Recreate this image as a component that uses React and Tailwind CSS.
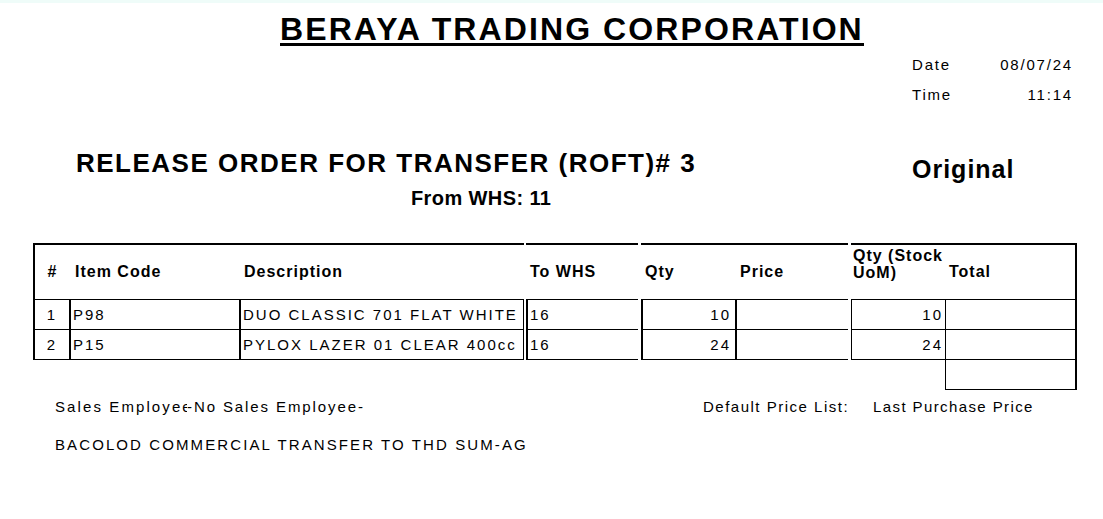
import React from 'react';

const rows = [
  { no: '1', code: 'P98', desc: 'DUO CLASSIC 701 FLAT WHITE', whs: '16', qty: '10', stock: '10' },
  { no: '2', code: 'P15', desc: 'PYLOX LAZER 01 CLEAR 400cc', whs: '16', qty: '24', stock: '24' },
];

const ReleaseOrder = () => {
  return (
    <div className="w-[1103px] h-[519px] bg-white text-black overflow-hidden font-['Liberation_Sans',Arial,sans-serif]">
      <div className="h-[3px] bg-[#effcf9]" />

      {/* company title */}
      <div className="ml-[280px] mt-[12px]">
        <span className="inline-block text-[32px] leading-[28px] font-bold tracking-[2.1px] border-b-[3px] border-black">
          BERAYA TRADING CORPORATION
        </span>
      </div>

      <div className="ml-[912px] mt-[3px] w-[161px] text-[15px] leading-[30px] tracking-[1.8px]">
        <div className="flex justify-between">
          <span>Date</span>
          <span>08/07/24</span>
        </div>
        <div className="flex justify-between">
          <span>Time</span>
          <span>11:14</span>
        </div>
      </div>

      <div className="flex items-start mt-[40px]">
        <div className="w-[912px] pl-[76px]">
          <div className="text-[26px] leading-[26px] font-bold tracking-[1.5px]">RELEASE ORDER FOR TRANSFER (ROFT)# 3</div>
          <div className="ml-[335px] mt-[12px] text-[20px] leading-[20px] font-bold tracking-[0.4px]">From WHS: 11</div>
        </div>
        <div className="mt-[7px] text-[25px] leading-[25px] font-bold tracking-[1px]">Original</div>
      </div>

      {/* line items */}
      <div className="ml-[33px] mt-[35px] w-[1044px] text-[15px] tracking-[2px]">
        <div className="flex h-[56px] text-[16px] font-bold tracking-[1px]">
          <div className="w-[491px] flex items-center border-t-2 border-l-2 border-black">
            <div className="w-[35px] text-center">#</div>
            <div className="w-[170px] pl-[5px]">Item Code</div>
            <div className="pl-[4px]">Description</div>
          </div>
          <div className="w-[2px]" />
          <div className="w-[112px] flex items-center border-t-2 border-black pl-[4px]">To WHS</div>
          <div className="w-[3px]" />
          <div className="w-[207px] flex items-center border-t-2 border-black">
            <div className="w-[96px] pl-[4px]">Qty</div>
            <div className="pl-[3px]">Price</div>
          </div>
          <div className="w-[3px]" />
          <div className="w-[226px] flex border-t-2 border-r-2 border-black">
            <div className="w-[94px] pl-[2px] pt-[2px] leading-[17px]">Qty (Stock<br />UoM)</div>
            <div className="pl-[4px] self-center">Total</div>
          </div>
        </div>

        {rows.map((r, i) => {
          const last = i === rows.length - 1 ? 'border-b' : '';
          return (
            <div key={r.no} className={`flex ${last ? 'h-[31px]' : 'h-[30px]'} leading-[29px]`}>
              <div className={`w-[38px] border-t border-l-2 border-r-2 border-black text-center ${last}`}>{r.no}</div>
              <div className={`w-[170px] border-t border-r-2 border-black pl-[2px] ${last}`}>{r.code}</div>
              <div className={`w-[283px] border-t border-r border-black pl-[2px] whitespace-nowrap ${last}`}>{r.desc}</div>
              <div className="w-[2px]" />
              <div className={`w-[112px] border-t border-l-2 border-black pl-[2px] ${last}`}>{r.whs}</div>
              <div className="w-[3px]" />
              <div className={`w-[96px] border-t border-l-2 border-r-2 border-black text-right pr-[4px] ${last}`}>{r.qty}</div>
              <div className={`w-[111px] border-t border-black ${last}`} />
              <div className="w-[3px]" />
              <div className={`w-[94px] border-t border-l border-black text-right pr-[2px] ${last}`}>{r.stock}</div>
              <div className={`w-[132px] border-t border-l border-r-2 border-black ${last}`} />
            </div>
          );
        })}

        <div className="ml-[912px] w-[132px] h-[30px] border-l border-r-2 border-b border-black" />
      </div>

      {/* footer */}
      <div className="flex mt-[7px] text-[15px] leading-[20px] tracking-[1.9px] whitespace-nowrap">
        <div className="w-[703px] pl-[55px] flex">
          {/* field is too narrow in the printout, last letter gets cut */}
          <span className="inline-block w-[132px] shrink-0 overflow-hidden tracking-[2.1px]">Sales Employee</span>
          <span>-No Sales Employee-</span>
        </div>
        <div className="w-[170px] tracking-[1.5px]">Default Price List:</div>
        <div className="tracking-[1.4px]">Last Purchase Price</div>
      </div>
      <div className="pl-[55px] mt-[18px] text-[15px] leading-[20px] tracking-[2.1px]">
        BACOLOD COMMERCIAL TRANSFER TO THD SUM-AG
      </div>
    </div>
  );
};

export default function App() {
  return <ReleaseOrder />;
}
